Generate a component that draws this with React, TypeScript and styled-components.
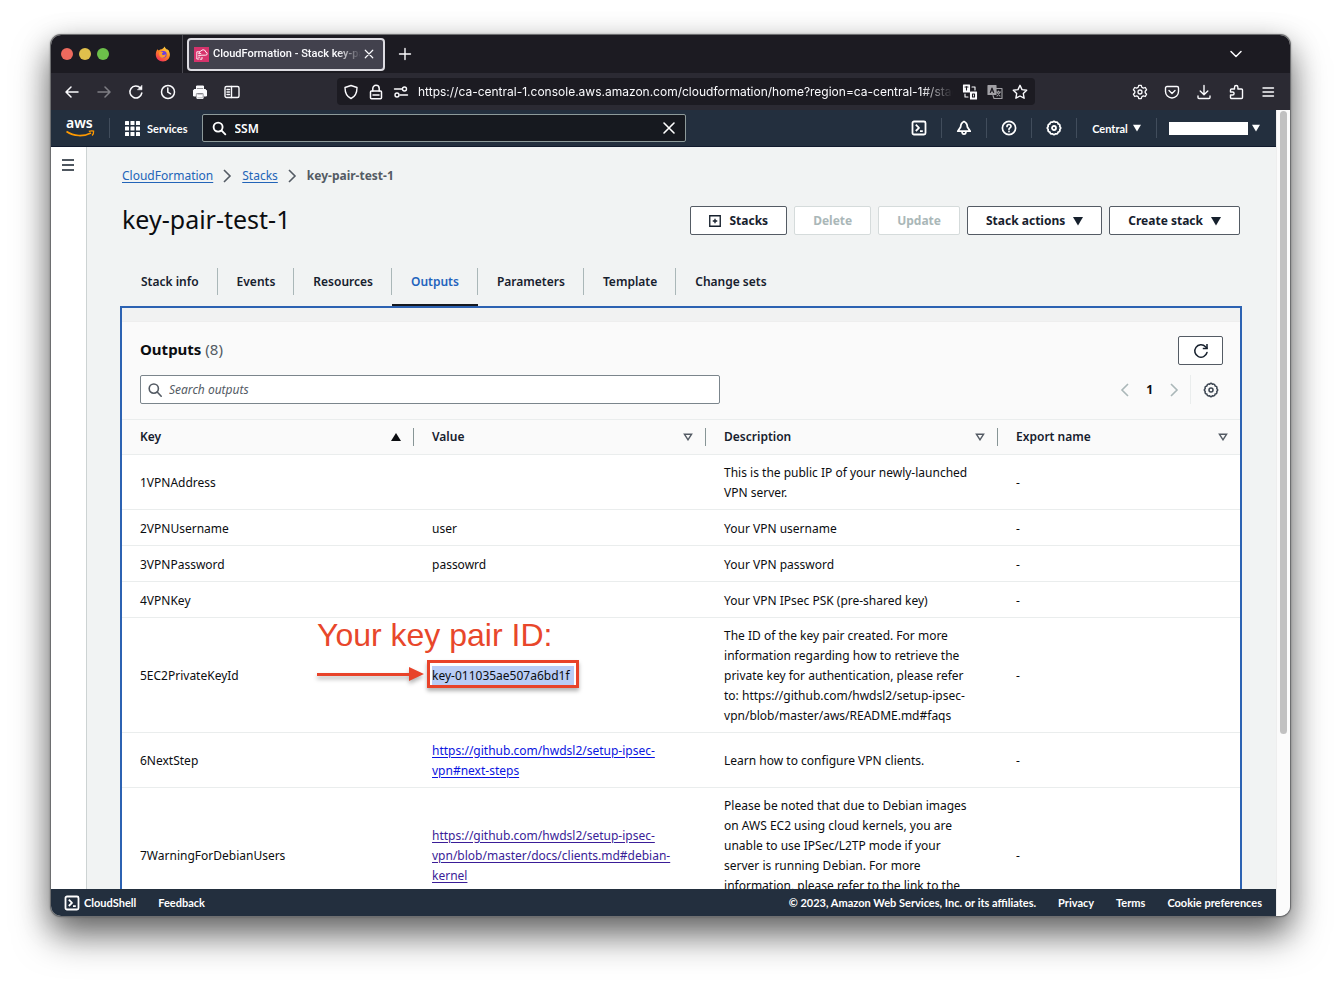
import React from "react";
import styled, { createGlobalStyle, css } from "styled-components";

const uiFont = '"Noto Sans", "Open Sans", "Liberation Sans", sans-serif';
const navFont = 'Lato, "Noto Sans", sans-serif';
const chromeFont = 'Inter, "Liberation Sans", sans-serif';

const GlobalStyle = createGlobalStyle`
  *, *::before, *::after { box-sizing: border-box; }
  html, body { margin: 0; padding: 0; background: #fff; }
  body { font-family: ${uiFont}; font-size: 12px; line-height: 20px; color: #0b0d10; overflow: hidden; }
  button, input { font-family: inherit; }
  h1, h2, p, ol { margin: 0; padding: 0; }
  svg { display: block; flex: none; }
`;

/* ---------- window ---------- */

const Desktop = styled.div`
  display: flex;
  height: 100vh;
  min-height: 600px;
  padding: 35px 50px 67px 51px;
`;

const Window = styled.div`
  flex: 1;
  min-width: 0;
  display: flex;
  flex-direction: column;
  border-radius: 10px;
  overflow: hidden;
  background: #fbfbfb;
  box-shadow: 0 0 0 1px #6d6e70, 0 0 2px 1px rgba(0, 0, 0, 0.3), 0 20px 36px rgba(0, 0, 0, 0.5),
    0 8px 30px rgba(0, 0, 0, 0.25);
`;

const TabStrip = styled.div`
  display: flex;
  align-items: center;
  height: 38px;
  flex: none;
  padding: 0 46px 0 10px;
  background: #1c1b22;
  color: #fbfbfe;
  font-family: ${chromeFont};
`;

const Lights = styled.div`
  display: flex;
  gap: 6px;
`;

const Light = styled.span<{ $color: string }>`
  width: 12px;
  height: 12px;
  border-radius: 50%;
  background: ${(p) => p.$color};
`;

const PinnedTab = styled.div`
  display: flex;
  align-items: center;
  justify-content: flex-end;
  width: 74px;
  height: 38px;
  margin-right: 4px;
  padding-right: 11px;
  border-right: 1px solid #4a4951;
`;

const BrowserTab = styled.div`
  display: flex;
  align-items: center;
  width: 198px;
  height: 33px;
  padding: 0 6px 0 5px;
  border: 2px solid #dddce2;
  border-radius: 4px;
  background: #42414d;
`;

const TabTitle = styled.span`
  flex: 1;
  min-width: 0;
  margin-left: 4px;
  overflow: hidden;
  white-space: nowrap;
  font-family: Roboto, sans-serif;
  font-size: 11px;
  font-weight: 500;
  mask-image: linear-gradient(to right, #000 84%, transparent 100%);
`;

const IconButton = styled.button<{ $dim?: boolean }>`
  display: flex;
  align-items: center;
  justify-content: center;
  flex: none;
  width: 16px;
  height: 16px;
  padding: 0;
  border: 0;
  background: none;
  color: inherit;
  opacity: ${(p) => (p.$dim ? 0.4 : 1)};
`;

const Spacer = styled.div`
  flex: 1;
`;

const NewTab = styled.div`
  margin-left: 12px;
`;

const BrowserBar = styled.div`
  display: flex;
  align-items: center;
  height: 37px;
  flex: none;
  padding: 0 14px 0 13px;
  background: #2b2a33;
  color: #fbfbfe;
  font-family: ${chromeFont};
`;

const IconRow = styled.div`
  display: flex;
  gap: 16px;
`;

const UrlBox = styled.div`
  flex: 1;
  min-width: 0;
  display: flex;
  align-items: center;
  gap: 9px;
  height: 27px;
  margin: 0 97px;
  padding: 0 7px 0 6px;
  border-radius: 4px;
  background: #1c1b22;
`;

const UrlInput = styled.input`
  flex: 1;
  min-width: 0;
  padding: 0;
  border: 0;
  outline: 0;
  background: none;
  color: #fbfbfe;
  font-size: 12px;
  font-weight: 400;
  mask-image: linear-gradient(to right, #000 94%, transparent 100%);
`;

/* ---------- console ---------- */

const Viewport = styled.div`
  flex: 1;
  min-height: 0;
  display: flex;
`;

const Console = styled.div`
  flex: 1;
  min-width: 0;
  display: flex;
  flex-direction: column;
`;

const ScrollTrack = styled.div`
  width: 14px;
  flex: none;
  padding: 1px 3px;
  background: #fbfbfb;
  border-left: 1px solid #eeeeee;
`;

const ScrollThumb = styled.div`
  height: 77.5%;
  border-radius: 4px;
  background: #c1c1c1;
`;

const Nav = styled.nav`
  display: flex;
  align-items: center;
  height: 37px;
  flex: none;
  background: #232f3e;
  border-bottom: 1px solid #10192c;
  color: #fff;
  font-family: ${navFont};
  font-weight: 700;
`;

const Logo = styled.a`
  display: block;
  width: 58px;
  padding-left: 15px;
  color: #fff;
`;

const Services = styled.button`
  display: flex;
  align-items: center;
  gap: 7px;
  height: 20px;
  padding: 0 14px 0 15px;
  border: 0;
  border-left: 1px solid #414d5c;
  background: none;
  color: #fff;
  font-size: 11px;
  font-weight: 700;
`;

const NavSearch = styled.label`
  display: flex;
  align-items: center;
  flex: 0 1 484px;
  min-width: 0;
  height: 28px;
  gap: 8px;
  padding: 0 8px 0 9px;
  border: 1px solid #8d9a9a;
  border-radius: 2px;
  background: #16191f;
`;

const NavSearchInput = styled.input`
  flex: 1;
  min-width: 0;
  padding: 0;
  border: 0;
  outline: 0;
  background: none;
  color: #fff;
  font-family: ${uiFont};
  font-size: 12px;
  font-weight: 600;
`;

const Utility = styled.button<{ $wide?: boolean }>`
  display: flex;
  align-items: center;
  justify-content: center;
  gap: 5px;
  height: 20px;
  width: ${(p) => (p.$wide ? "80px" : "45px")};
  padding: 0;
  border: 0;
  border-right: 1px solid #414d5c;
  background: none;
  color: #fff;
  font-size: 11px;
  font-weight: 700;
`;

const Account = styled.button`
  display: flex;
  align-items: center;
  gap: 4px;
  height: 20px;
  padding: 0 16px 0 12px;
  border: 0;
  background: none;
  color: #fff;
`;

const Redacted = styled.span`
  width: 79px;
  height: 13px;
  background: #fff;
`;

const Body = styled.div`
  flex: 1;
  min-height: 0;
  display: flex;
  overflow: hidden;
`;

const Side = styled.aside`
  width: 36px;
  flex: none;
  padding: 10px 9px;
  border-right: 1px solid #cdd3d3;
  background: #fff;
`;

const Main = styled.main`
  flex: 1;
  min-width: 0;
  padding: 19px 34px 0 33px;
  background: #f1f3f3;
  overflow: hidden;
`;

const Crumbs = styled.ol`
  display: flex;
  align-items: center;
  gap: 10px;
  padding-left: 2px;
  list-style: none;
  color: #545b64;
`;

const Crumb = styled.li<{ $current?: boolean }>`
  display: flex;
  align-items: center;
  gap: 10px;
  font-weight: ${(p) => (p.$current ? 700 : 400)};
`;

const TextLink = styled.a<{ $tone?: "crumb" | "plain" | "visited" }>`
  color: ${(p) => (p.$tone === "crumb" ? "#2264b8" : p.$tone === "visited" ? "#3a1d97" : "#0a14e0")};
  text-decoration: underline;
  text-underline-offset: 2px;
`;

const TitleRow = styled.header`
  display: flex;
  align-items: center;
  justify-content: space-between;
  margin-top: 20px;
  padding: 0 2px;
`;

const Title = styled.h1`
  padding-bottom: 3px;
  font-size: 25px;
  line-height: 26px;
  font-weight: 400;
`;

const Actions = styled.div`
  display: flex;
  gap: 7px;
`;

const Button = styled.button`
  display: flex;
  align-items: center;
  justify-content: center;
  gap: 8px;
  height: 29px;
  padding: 0 18px;
  border: 1px solid #545b64;
  border-radius: 2px;
  background: #fff;
  color: #16202d;
  font-size: 12px;
  font-weight: 700;
  &:disabled {
    border-color: #d5dbdb;
    color: #aab7b8;
  }
`;

const Tabs = styled.div`
  display: flex;
  margin-top: 33px;
  padding-left: 2px;
`;

const TabLabel = styled.span`
  display: block;
  padding: 0 18px 0 19px;
  border-right: 1px solid #aab7b8;
  line-height: 27px;
`;

const Tab = styled.button<{ $active?: boolean }>`
  display: flex;
  align-items: flex-start;
  height: 38px;
  padding: 0;
  border: 0;
  border-bottom: 2px solid ${(p) => (p.$active ? "#16191f" : "transparent")};
  background: none;
  color: ${(p) => (p.$active ? "#1f63bd" : "#16202d")};
  font-size: 12px;
  font-weight: 600;
  &:last-child ${TabLabel} {
    border-right: 0;
  }
`;

const Panel = styled.section`
  padding-top: 13px;
  border: 2px solid #2c62b2;
  background: #f1f2f2;
`;

const PanelHead = styled.div`
  padding: 14px 17px 15px 18px;
  border-top: 1px solid #eeeeee;
  background: #fafafa;
`;

const HeadRow = styled.div`
  display: flex;
  align-items: center;
  justify-content: space-between;
  & + & {
    margin-top: 10px;
  }
`;

const PanelTitle = styled.h2`
  padding-bottom: 3px;
  font-size: 15px;
  font-weight: 700;
`;

const Count = styled.span`
  color: #545b64;
  font-weight: 400;
`;

const RefreshButton = styled(Button)`
  width: 45px;
  padding: 0;
`;

const SearchBox = styled.label`
  display: flex;
  align-items: center;
  gap: 6px;
  flex: 0 1 580px;
  height: 29px;
  padding: 0 6px;
  border: 1px solid #7b858c;
  border-radius: 2px;
  background: #fff;
  color: #545b64;
`;

const SearchInput = styled.input`
  flex: 1;
  min-width: 0;
  padding: 0;
  border: 0;
  outline: 0;
  background: none;
  font-size: 12px;
  &::placeholder {
    color: #545b64;
    font-style: italic;
  }
`;

const HeadTools = styled.div`
  display: flex;
  align-items: center;
  gap: 11px;
`;

const Pager = styled.div`
  display: flex;
  align-items: center;
  gap: 17px;
  color: #aab7b8;
`;

const PageNumber = styled.span`
  color: #0b0d10;
  font-weight: 700;
`;

const Preferences = styled.div`
  display: flex;
  align-items: center;
  height: 29px;
  padding: 0 4px 0 12px;
  border-left: 1px solid #eaeded;
  color: #3a4450;
`;

const Table = styled.table`
  width: 100%;
  table-layout: fixed;
  border-collapse: separate;
  border-spacing: 0;
  background: #fff;
`;

const HeadCell = styled.th<{ $last?: boolean }>`
  width: ${(p) => (p.$last ? "auto" : "26.12%")};
  height: 36px;
  padding: 0;
  border-top: 1px solid #eaeded;
  border-bottom: 1px solid #eaeded;
  background: #fafafa;
  color: #16202d;
  text-align: left;
  font-weight: 600;
`;

const HeadInner = styled.div<{ $last?: boolean }>`
  display: flex;
  align-items: center;
  justify-content: space-between;
  height: 18px;
  padding: 0 12px 0 18px;
  ${(p) =>
    !p.$last &&
    css`
      border-right: 1px solid #879596;
    `}
`;

const Cell = styled.td`
  height: 36px;
  padding: 8px 26px 6px 18px;
  border-bottom: 1px solid #eaeded;
  vertical-align: middle;
  overflow-wrap: break-word;
`;

/* ---------- annotation over the key id ---------- */

const Marked = styled.span`
  position: relative;
  display: inline-block;
  padding-right: 4px;
  background: #b9cdf6;
`;

const MarkBox = styled.span`
  position: absolute;
  inset: -6px -5px -2px;
  border: 3px solid #e8432a;
  box-shadow: 0 3px 4px rgba(0, 0, 0, 0.3);
`;

const Note = styled.span`
  position: absolute;
  left: -115px;
  bottom: 35px;
  color: #e8472b;
  font-family: "Liberation Sans", sans-serif;
  font-size: 32px;
  line-height: 32px;
  white-space: nowrap;
`;

const Arrow = styled.svg`
  position: absolute;
  left: -115px;
  top: -1px;
  overflow: visible;
  filter: drop-shadow(0 3px 2px rgba(0, 0, 0, 0.3));
`;

const Footer = styled.footer`
  display: flex;
  align-items: center;
  flex: none;
  height: 27px;
  padding: 1px 14px 0 13px;
  background: #232f3e;
  color: #fff;
  font-family: ${navFont};
  font-size: 11px;
  font-weight: 700;
`;

const FooterLink = styled.a<{ $first?: boolean }>`
  display: flex;
  align-items: center;
  gap: 4px;
  margin-left: ${(p) => (p.$first ? "0" : "22px")};
  color: #fff;
  text-decoration: none;
`;

/* ---------- icons ---------- */

type GlyphProps = { size?: number; w?: number; children: React.ReactNode };
const Glyph = ({ size = 16, w = 1.3, children }: GlyphProps) => (
  <svg
    width={size}
    height={size}
    viewBox="0 0 16 16"
    fill="none"
    stroke="currentColor"
    strokeWidth={w}
    strokeLinecap="round"
    strokeLinejoin="round"
    aria-hidden="true"
  >
    {children}
  </svg>
);

const Caret = ({ size = 8 }: { size?: number }) => (
  <svg width={size} height={size} viewBox="0 0 8 8" fill="currentColor" aria-hidden="true">
    <path d="M0 .8h8L4 7.6z" />
  </svg>
);

const Chevron = ({ left }: { left?: boolean }) => (
  <svg width="9" height="14" viewBox="0 0 9 14" fill="none" stroke="currentColor" strokeWidth="1.6" aria-hidden="true">
    <path d={left ? "M8 1 2 7l6 6" : "M1 1l6 6-6 6"} />
  </svg>
);

const SortMark = ({ up }: { up?: boolean }) => (
  <svg width="10" height="8" viewBox="0 0 10 8" fill={up ? "#0b0d10" : "none"} stroke={up ? "none" : "#545b64"} strokeWidth="1.4" aria-hidden="true">
    <path d={up ? "M0 8h10L5 0z" : "M1.4 1.2h7.2L5 6.8z"} />
  </svg>
);

const ShellIcon = () => (
  <Glyph w={1.8}>
    <rect x="1.5" y="1.5" width="13" height="13" rx="1.5" />
    <path d="M4.8 4.6 8 7.8l-3.2 3.2M9 11.2h2.8" strokeLinecap="butt" />
  </Glyph>
);

const GearRound = ({ w = 1.8 }: { w?: number }) => (
  <Glyph w={w}>
    <path d="M6.600 2.200Q8 .4 9.400 2.200Q11.800 1.600 12.100 3.900Q14.400 4.200 13.800 6.600Q15.600 8 13.800 9.400Q14.400 11.800 12.100 12.100Q11.800 14.400 9.400 13.800Q8 15.600 6.600 13.800Q4.200 14.400 3.900 12.100Q1.600 11.800 2.200 9.400Q.4 8 2.200 6.600Q1.600 4.200 3.900 3.900Q4.200 1.600 6.600 2.200z" />
    <circle cx="8" cy="8" r="2" />
  </Glyph>
);

const SearchIcon = ({ w = 1.6 }: { w?: number }) => (
  <Glyph w={w}>
    <circle cx="6.8" cy="6.6" r="4.6" />
    <path d="M10.2 10l4 4.2" />
  </Glyph>
);

const Firefox = () => (
  <svg width="16" height="16" viewBox="0 0 16 16" aria-hidden="true">
    <defs>
      <linearGradient id="ffFlame" x1="0.8" y1="0" x2="0.2" y2="1">
        <stop offset="0" stopColor="#ffe14a" />
        <stop offset="0.45" stopColor="#ff8a1f" />
        <stop offset="1" stopColor="#f0285e" />
      </linearGradient>
    </defs>
    <path
      d="M2.6 3.2c.3.7.7 1 1.2 1.2C4.6 3.6 5.6 3.2 6.6 3.2 8 3.2 8.4 1.8 9.9.6c0 1.5 1 2 2 3 1.2-.1 1.6.6 2 1.3 2.8 5-.5 10.5-5.9 10.5C3.800 15.400.8 12.200.8 8.400.8 6.200 1.500 4.400 2.600 3.200z"
      fill="url(#ffFlame)"
    />
    <circle cx="8.3" cy="8.4" r="3.3" fill="#6a3fe0" />
    <path d="M4.2 6.4c1.5-1.2 3.2-.6 4.3.3-1.5 0-1.8 1-1.3 1.7.8 1.1 2.6.8 3.5-.3.2 2.4-1.4 3.7-3.1 3.6-2.3-.1-3.9-2.400-3.400-5.300z" fill="#ff9a2a" />
  </svg>
);

const StackFavicon = () => (
  <svg width="15" height="15" viewBox="0 0 15 15" aria-hidden="true">
    <rect width="15" height="15" fill="#d6336c" />
    <g fill="none" stroke="#fff" strokeWidth="0.9" strokeLinejoin="round">
      <path d="M5.4 12H2.800V4.800h3M4.200 6.600h3M4.200 8.400h3.200M4.200 10.200h2" />
      <path d="M6 12.200h2V10" />
      <path d="M7.200 8.200h4.400a1.500 1.500 0 0 0 .2-3 2.600 2.600 0 0 0-4.900-1C5.600 4.200 5 5 5.600 6" />
    </g>
  </svg>
);

const AwsLogo = () => (
  <svg width="32" height="28" viewBox="0 0 32 28" overflow="visible" aria-hidden="true">
    <text x="0" y="14" fill="#fff" fontFamily="Noto Sans, sans-serif" fontSize="14" fontWeight="600">
      aws
    </text>
    <path d="M0.500 17.500c7.500 5 17 5.200 24.500 1.400" fill="none" stroke="#f90" strokeWidth="1.700" />
    <path d="M22.800 17.300c1.800-.6 3.600-.6 4.800-.2.200 1.400-.3 3-1.500 4.400" fill="none" stroke="#f90" strokeWidth="1.300" />
  </svg>
);

const Grid = () => (
  <svg width="15" height="15" viewBox="0 0 15 15" fill="#fff" aria-hidden="true">
    {[0, 5.5, 11].map((y) => [0, 5.5, 11].map((x) => <rect key={`${x}-${y}`} x={x} y={y} width="4" height="4" rx="0.5" />))}
  </svg>
);

/* ---------- data ---------- */

type Row = { key: string; value?: React.ReactNode; description: string };

const KeyId = () => (
  <Marked>
    key-011035ae507a6bd1f
    <MarkBox />
    <Note>Your key pair ID:</Note>
    <Arrow width="107" height="18" viewBox="0 0 107 18" aria-hidden="true">
      <path d="M0 8h92V2l15 7-15 7v-5H0z" fill="#e8432a" />
    </Arrow>
  </Marked>
);

const rows: Row[] = [
  { key: "1VPNAddress", description: "This is the public IP of your newly-launched VPN server." },
  { key: "2VPNUsername", value: "user", description: "Your VPN username" },
  { key: "3VPNPassword", value: "passowrd", description: "Your VPN password" },
  { key: "4VPNKey", description: "Your VPN IPsec PSK (pre-shared key)" },
  {
    key: "5EC2PrivateKeyId",
    value: <KeyId />,
    description:
      "The ID of the key pair created. For more information regarding how to retrieve the private key for authentication, please refer to: https://github.com/hwdsl2/setup-ipsec-vpn/blob/master/aws/README.md#faqs",
  },
  {
    key: "6NextStep",
    value: <TextLink href="#next-steps">https://github.com/hwdsl2/setup-ipsec-vpn#next-steps</TextLink>,
    description: "Learn how to configure VPN clients.",
  },
  {
    key: "7WarningForDebianUsers",
    value: (
      <TextLink href="#debian-kernel" $tone="visited">
        https://github.com/hwdsl2/setup-ipsec-vpn/blob/master/docs/clients.md#debian-kernel
      </TextLink>
    ),
    description:
      "Please be noted that due to Debian images on AWS EC2 using cloud kernels, you are unable to use IPSec/L2TP mode if your server is running Debian. For more information, please refer to the link to the left.",
  },
];

const columns = ["Key", "Value", "Description", "Export name"];
const tabs = ["Stack info", "Events", "Resources", "Outputs", "Parameters", "Template", "Change sets"];

export default function App() {
  return (
    <>
      <GlobalStyle />
      <Desktop>
        <Window>
          <TabStrip>
            <Lights>
              <Light $color="#ed6a5e" />
              <Light $color="#e0c04c" />
              <Light $color="#6cc04a" />
            </Lights>
            <PinnedTab>
              <Firefox />
            </PinnedTab>
            <BrowserTab>
              <StackFavicon />
              <TabTitle>CloudFormation - Stack key-pair</TabTitle>
              <IconButton aria-label="Close tab">
                <Glyph size={12} w={1.6}>
                  <path d="M3 3l10 10M13 3L3 13" />
                </Glyph>
              </IconButton>
            </BrowserTab>
            <NewTab>
              <IconButton aria-label="New tab">
                <Glyph w={1.4}>
                  <path d="M8 2.500v11M2.500 8h11" />
                </Glyph>
              </IconButton>
            </NewTab>
            <Spacer />
            <IconButton aria-label="List all tabs">
              <Glyph w={1.500}>
                <path d="M3 5.500l5 5 5-5" />
              </Glyph>
            </IconButton>
          </TabStrip>

          <BrowserBar>
            <IconRow>
              <IconButton aria-label="Back">
                <Glyph w={1.5}>
                  <path d="M14 8H2.200M7 3L2 8l5 5" />
                </Glyph>
              </IconButton>
              <IconButton aria-label="Forward" $dim>
                <Glyph w={1.5}>
                  <path d="M2 8h11.800M9 3l5 5-5 5" />
                </Glyph>
              </IconButton>
              <IconButton aria-label="Reload">
                <Glyph w={1.5}>
                  <path d="M13.800 9A6 6 0 1 1 12.400 4" />
                  <path d="M14 1.500v4.300H9.700z" fill="currentColor" strokeWidth="0.500" />
                </Glyph>
              </IconButton>
              <IconButton aria-label="History">
                <Glyph w={1.5}>
                  <circle cx="8" cy="8" r="6.500" />
                  <path d="M7.800 4v4.200l2.800 1.600" />
                </Glyph>
              </IconButton>
              <IconButton aria-label="Print">
                <Glyph w={1}>
                  <path d="M4.500 4.500V2h7v2.500M2.500 5.500h11l1 1V12h-2.500V9.500h-8V12H1.500V6.500z" fill="currentColor" />
                  <path d="M4.800 9.800h6.400v4.400H4.800z" fill="#fbfbfe" stroke="#2b2a33" strokeWidth="0.800" />
                  <path d="M4.900 10v4.400h6.200V10" />
                </Glyph>
              </IconButton>
              <IconButton aria-label="Sidebar">
                <Glyph w={1.4}>
                  <rect x="1" y="2.500" width="14" height="11" rx="1.500" />
                  <path d="M7.500 2.500v11M3 5.500h2.500M3 8h2.500M3 10.500h2.500" />
                </Glyph>
              </IconButton>
            </IconRow>
            <UrlBox>
              <Glyph w={1.4}>
                <path d="M8 1.500l6 2c0 5-1.500 9-6 11-4.500-2-6-6-6-11z" />
              </Glyph>
              <Glyph w={1.5}>
                <rect x="2.500" y="7" width="11" height="7.800" rx="1" />
                <path d="M4.800 7V4.500a3.200 3.200 0 0 1 6.400 0V7M5 11h6" />
              </Glyph>
              <Glyph w={1.4}>
                <path d="M1.500 5h7.500M7 11h7.500" />
                <circle cx="11.500" cy="5" r="2" />
                <circle cx="4" cy="11" r="2" />
              </Glyph>
              <UrlInput
                aria-label="Address"
                readOnly
                value="https://ca-central-1.console.aws.amazon.com/cloudformation/home?region=ca-central-1#/stacks"
              />
              <Glyph w={1.1}>
                <rect x="1.500" y="1" width="6" height="7" fill="currentColor" />
                <rect x="8.500" y="8" width="6" height="7" fill="currentColor" />
                <path d="M10 3h3v3M3 10v3h3" />
                <path d="M3 3h3M4.500 2.500v3.500M10.500 10h2v3h-2z" stroke="#1c1b22" />
              </Glyph>
              <Glyph w={1.1}>
                <g opacity="0.600">
                  <rect x="1" y="1.500" width="8" height="9" fill="currentColor" />
                  <path d="M9 4.500h6v10H7l-1-3" />
                  <path d="M9.500 8h4M11.500 7v1M10 12l3-3.500M10.500 9l2.500 3" />
                  <path d="M3.300 8.500L5 4l1.700 4.500M4 7h2" stroke="#1c1b22" />
                </g>
              </Glyph>
              <Glyph w={1.4}>
                <path d="M8 1.300l2 4.300 4.700.6-3.400 3.300.8 4.700L8 12l-4.100 2.200.8-4.700L1.300 6.200 6 5.600z" />
              </Glyph>
            </UrlBox>
            <IconRow>
              <IconButton aria-label="Settings">
                <Glyph w={1.3}>
                  <path d="M6.700 1.300h2.600l.5 2 1.500.8 2-.6 1.300 2.300L13.200 7.200v1.600l1.400 1.400-1.300 2.300-2-.6-1.500.8-.5 2H6.700l-.5-2-1.500-.8-2 .6-1.300-2.300 1.400-1.400V7.200L1.400 5.800l1.300-2.300 2 .6 1.500-.8z" />
                  <circle cx="8" cy="8" r="2" />
                </Glyph>
              </IconButton>
              <IconButton aria-label="Pocket">
                <Glyph w={1.4}>
                  <path d="M3 2.500h10a1.500 1.500 0 0 1 1.500 1.500v3.500a6.500 6.500 0 0 1-13 0V4A1.500 1.500 0 0 1 3 2.500z" />
                  <path d="M5 6.500l3 3 3-3" />
                </Glyph>
              </IconButton>
              <IconButton aria-label="Downloads">
                <Glyph w={1.4}>
                  <path d="M8 1.500v9M4.200 7L8 10.700 11.800 7M2 12v1.500a1 1 0 0 0 1 1h10a1 1 0 0 0 1-1V12" />
                </Glyph>
              </IconButton>
              <IconButton aria-label="Extensions">
                <Glyph w={1.4}>
                  <path d="M3.500 5h3V3.200a1.700 1.700 0 0 1 3.400 0V5h3.600a1 1 0 0 1 1 1v7.500a1 1 0 0 1-1 1H3.500a1 1 0 0 1-1-1V11H4.600a1.500 1.500 0 0 0 0-3H2.500V6a1 1 0 0 1 1-1z" />
                </Glyph>
              </IconButton>
              <IconButton aria-label="Menu">
                <Glyph w={1.4}>
                  <path d="M3 4h10.500M3 8h10.500M3 12h10.500" />
                </Glyph>
              </IconButton>
            </IconRow>
          </BrowserBar>

          <Viewport>
            <Console>
              <Nav>
                <Logo href="#home" aria-label="AWS home">
                  <AwsLogo />
                </Logo>
                <Services>
                  <Grid />
                  Services
                </Services>
                <NavSearch>
                  <Glyph size={15} w={2}>
                    <circle cx="6.500" cy="6.500" r="4.800" />
                    <path d="M10.300 10.300l3.900 3.900" />
                  </Glyph>
                  <NavSearchInput aria-label="Search services" defaultValue="SSM" />
                  <IconButton type="button" aria-label="Clear search">
                    <Glyph w={1.6}>
                      <path d="M3 3l10 10M13 3L3 13" />
                    </Glyph>
                  </IconButton>
                </NavSearch>
                <Spacer />
                <Utility aria-label="CloudShell">
                  <ShellIcon />
                </Utility>
                <Utility aria-label="Notifications">
                  <Glyph w={1.8}>
                    <path d="M8 1.500C5.800 2.300 4.800 4 4.600 7L1.800 11.200h12.400L11.400 7C11.200 4 10.200 2.300 8 1.500zM6 11.500c.2 3.600 3.800 3.600 4 0" />
                  </Glyph>
                </Utility>
                <Utility aria-label="Help">
                  <Glyph w={1.700}>
                    <circle cx="8" cy="8" r="6.600" />
                    <path d="M6 6.500c0-2.700 4-2.600 4-.2C10 7.800 8 7.900 8 9.300M8 11.300v.3" />
                  </Glyph>
                </Utility>
                <Utility aria-label="Settings">
                  <GearRound />
                </Utility>
                <Utility $wide>
                  Central
                  <Caret />
                </Utility>
                <Account aria-label="Account">
                  <Redacted />
                  <Caret />
                </Account>
              </Nav>

              <Body>
                <Side>
                  <IconButton aria-label="Open navigation">
                    <Glyph w={1.5}>
                      <path d="M2 3h12M2 8h12M2 13h12" strokeLinecap="butt" stroke="#16202d" />
                    </Glyph>
                  </IconButton>
                </Side>
                <Main>
                  <Crumbs>
                    <Crumb>
                      <TextLink href="#cloudformation" $tone="crumb">CloudFormation</TextLink>
                      <Chevron />
                    </Crumb>
                    <Crumb>
                      <TextLink href="#stacks" $tone="crumb">Stacks</TextLink>
                      <Chevron />
                    </Crumb>
                    <Crumb $current>key-pair-test-1</Crumb>
                  </Crumbs>

                  <TitleRow>
                    <Title>key-pair-test-1</Title>
                    <Actions>
                      <Button>
                        <Glyph size={12} w={1.8}>
                          <path d="M1 1h14v14H1zM8 5v6M5 8h6" strokeLinejoin="miter" strokeLinecap="butt" />
                        </Glyph>
                        Stacks
                      </Button>
                      <Button disabled>Delete</Button>
                      <Button disabled>Update</Button>
                      <Button>
                        Stack actions
                        <Caret size={10} />
                      </Button>
                      <Button>
                        Create stack
                        <Caret size={10} />
                      </Button>
                    </Actions>
                  </TitleRow>

                  <Tabs role="tablist">
                    {tabs.map((name) => (
                      <Tab key={name} role="tab" aria-selected={name === "Outputs"} $active={name === "Outputs"}>
                        <TabLabel>{name}</TabLabel>
                      </Tab>
                    ))}
                  </Tabs>

                  <Panel>
                    <PanelHead>
                      <HeadRow>
                        <PanelTitle>
                          Outputs <Count>(8)</Count>
                        </PanelTitle>
                        <RefreshButton aria-label="Refresh">
                          <Glyph w={1.5}>
                            <path d="M14 9.500A6.200 6.200 0 1 1 12.500 3.700L14 5.200" />
                            <path d="M14 1v4.500H9.800" strokeLinejoin="miter" strokeLinecap="butt" />
                          </Glyph>
                        </RefreshButton>
                      </HeadRow>
                      <HeadRow>
                        <SearchBox>
                          <SearchIcon />
                          <SearchInput aria-label="Search outputs" placeholder="Search outputs" />
                        </SearchBox>
                        <HeadTools>
                          <Pager>
                            <Chevron left />
                            <PageNumber>1</PageNumber>
                            <Chevron />
                          </Pager>
                          <Preferences>
                            <GearRound w={1.5} />
                          </Preferences>
                        </HeadTools>
                      </HeadRow>
                    </PanelHead>
                    <Table>
                      <thead>
                        <tr>
                          {columns.map((name, i) => (
                            <HeadCell key={name} scope="col" $last={i === 3}>
                              <HeadInner $last={i === 3}>
                                {name}
                                <SortMark up={i === 0} />
                              </HeadInner>
                            </HeadCell>
                          ))}
                        </tr>
                      </thead>
                      <tbody>
                        {rows.map((row) => (
                          <tr key={row.key}>
                            <Cell>{row.key}</Cell>
                            <Cell>{row.value}</Cell>
                            <Cell>{row.description}</Cell>
                            <Cell>-</Cell>
                          </tr>
                        ))}
                      </tbody>
                    </Table>
                  </Panel>
                </Main>
              </Body>

              <Footer>
                <FooterLink href="#cloudshell" $first>
                  <ShellIcon />
                  CloudShell
                </FooterLink>
                <FooterLink href="#feedback">Feedback</FooterLink>
                <Spacer />
                <span>© 2023, Amazon Web Services, Inc. or its affiliates.</span>
                <FooterLink href="#privacy">Privacy</FooterLink>
                <FooterLink href="#terms">Terms</FooterLink>
                <FooterLink href="#cookies">Cookie preferences</FooterLink>
              </Footer>
            </Console>
            <ScrollTrack>
              <ScrollThumb />
            </ScrollTrack>
          </Viewport>
        </Window>
      </Desktop>
    </>
  );
}
